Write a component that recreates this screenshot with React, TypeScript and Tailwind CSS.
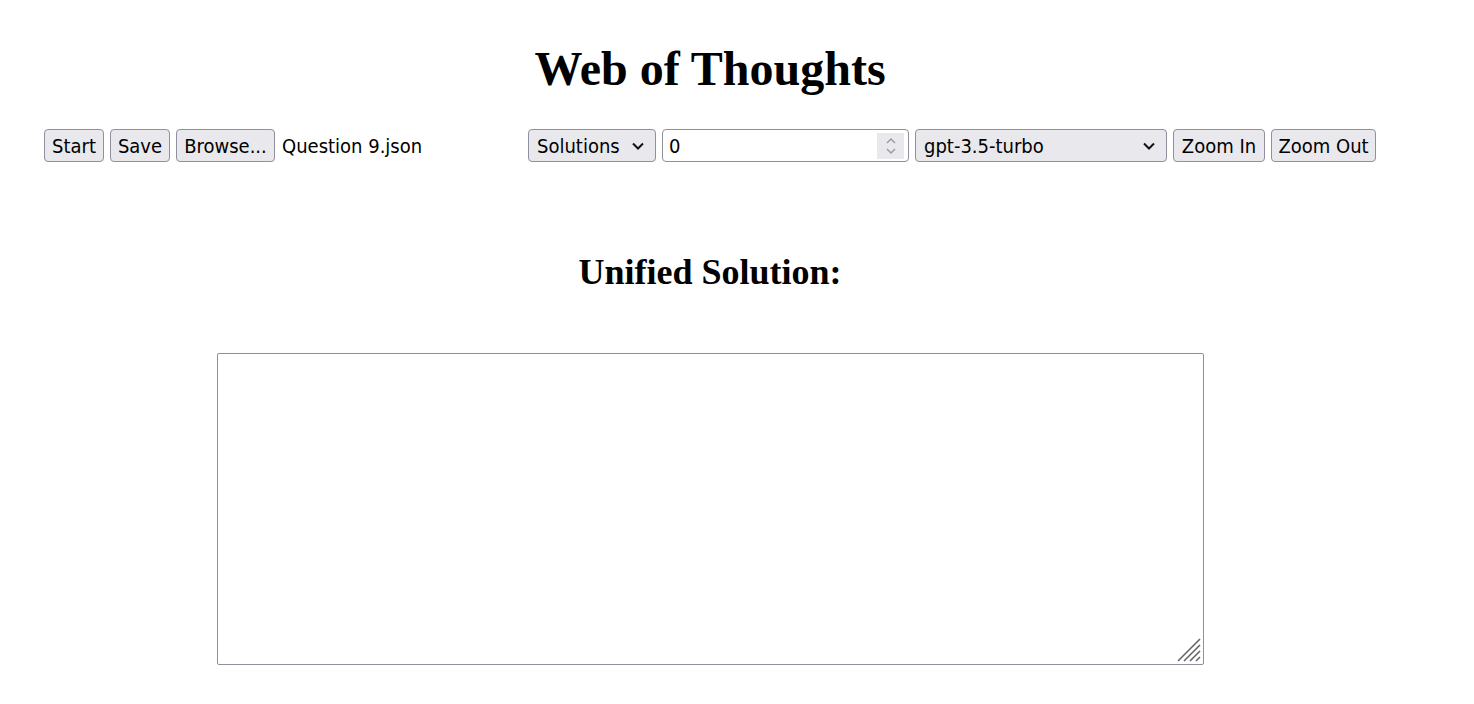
import React from 'react';

const uiFont = { fontFamily: 'Tahoma, "DejaVu Sans Condensed", "DejaVu Sans", sans-serif' };

const Btn = ({ label, w }: { label: string; w: string }) => (
  <button
    className={`${w} h-[33px] flex items-center justify-center bg-[#e9e9ed] border border-[#8f8f9d] rounded-[4px] text-[20px] text-black whitespace-nowrap`}
  >
    {label}
  </button>
);

const Chevron = () => (
  <svg width="14" height="10" viewBox="0 0 14 10" className="flex-shrink-0">
    <path d="M2 2.5 L7 7.5 L12 2.5" fill="none" stroke="#111" strokeWidth="2" />
  </svg>
);

const FakeSelect = ({ label, w }: { label: string; w: string }) => (
  <div
    className={`${w} h-[33px] flex items-center justify-between pl-[8px] pr-[10px] bg-[#e9e9ed] border border-[#8f8f9d] rounded-[4px] text-[20px] text-black whitespace-nowrap`}
  >
    <span>{label}</span>
    <Chevron />
  </div>
);

export default function App() {
  return (
    <div className="min-h-screen bg-white" style={uiFont}>
      <div className="w-[1420px] flex flex-col items-center">
        {/* --- TITLE --- */}
        <h1
          className="pt-[41px] text-[48px] leading-[55px] font-bold text-black"
          style={{ fontFamily: '"Liberation Serif", "Times New Roman", serif' }}
        >
          Web of Thoughts
        </h1>

        {/* --- TOOLBAR --- */}
        <div className="self-start ml-[44px] mt-[33px] flex items-center gap-[6px]">
          <Btn label="Start" w="w-[60px]" />
          <Btn label="Save" w="w-[60px]" />
          <Btn label="Browse..." w="w-[99px]" />
          <span className="w-[140px] flex-shrink-0 ml-[1px] text-[20px] text-black whitespace-nowrap">Question 9.json</span>
          <div className="ml-[100px]">
            <FakeSelect label="Solutions" w="w-[128px]" />
          </div>
          <div className="w-[247px] h-[33px] flex items-center justify-between pl-[6px] pr-[4px] bg-white border border-[#8f8f9d] rounded-[4px] text-[20px] text-black">
            <span>0</span>
            <div className="w-[27px] h-[26px] bg-[#e9e9ed] flex flex-col items-center justify-center gap-[2px]">
              <svg width="12" height="8" viewBox="0 0 12 8">
                <path d="M2 6 L6 2 L10 6" fill="none" stroke="#9a9aa3" strokeWidth="1.5" />
              </svg>
              <svg width="12" height="8" viewBox="0 0 12 8">
                <path d="M2 2 L6 6 L10 2" fill="none" stroke="#9a9aa3" strokeWidth="1.5" />
              </svg>
            </div>
          </div>
          <FakeSelect label="gpt-3.5-turbo" w="w-[252px]" />
          <Btn label="Zoom In" w="w-[92px]" />
          <Btn label="Zoom Out" w="w-[105px]" />
        </div>

        {/* --- UNIFIED SOLUTION --- */}
        <h2
          className="mt-[90px] text-[36px] leading-[41px] font-bold text-black"
          style={{ fontFamily: '"Liberation Serif", "Times New Roman", serif' }}
        >
          Unified Solution:
        </h2>

        <div className="relative mt-[60px] w-[987px] h-[312px] border border-[#8f8f9d] rounded-[2px] bg-white">
          <svg width="24" height="24" viewBox="0 0 24 24" className="absolute right-[2px] bottom-[2px]">
            <path d="M1 23 L23 1 M7 23 L23 7 M13 23 L23 13 M19 23 L23 19" stroke="#666" strokeWidth="1.6" />
          </svg>
        </div>
      </div>
    </div>
  );
}
